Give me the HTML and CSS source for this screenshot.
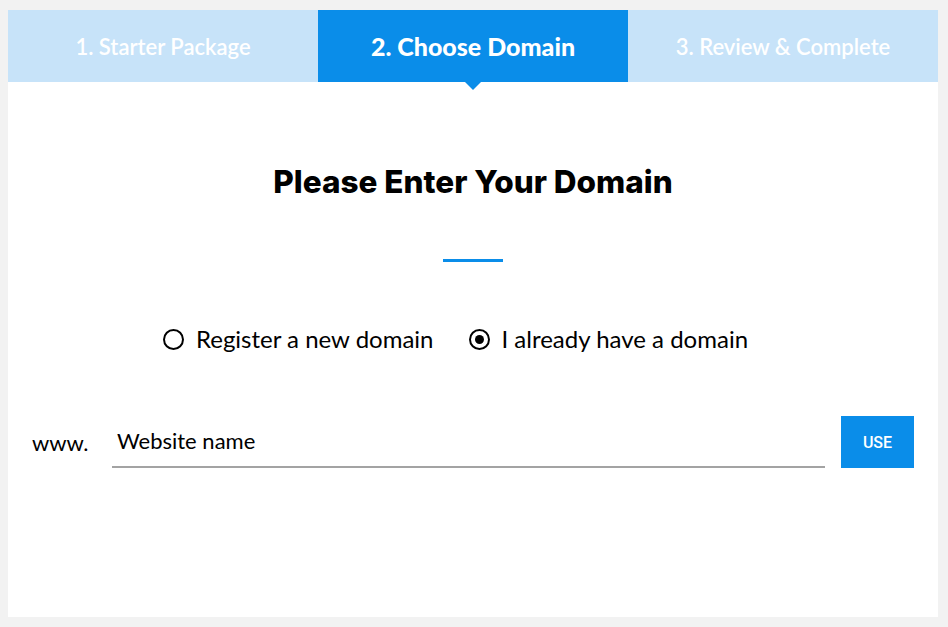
FILE: index.html
```html
<!DOCTYPE html>
<html>
<head>
<meta charset="utf-8">
<link rel="stylesheet" href="styles.css">
</head>
<body>
<div class="card">
  <div class="tabs">
    <div class="tab">1. Starter Package</div>
    <div class="tab active">2. Choose Domain</div>
    <div class="tab">3. Review &amp; Complete</div>
  </div>
  <div class="content">
    <h1 class="title">Please Enter Your Domain</h1>
    <div class="rule"></div>
    <div class="radios">
      <label class="radio"><span class="circle"></span>Register a new domain</label>
      <label class="radio"><span class="circle checked"></span>I already have a domain</label>
    </div>
    <div class="domain-row">
      <span class="prefix">www.</span>
      <div class="input">Website name</div>
      <button class="use">USE</button>
    </div>
  </div>
</div>
</body>
</html>
```
FILE: styles.css
```css
html, body { margin: 0; padding: 0; }
body {
  background: #f2f2f2;
  padding: 10px 10px 10px 8px;
  font-family: Lato, "Liberation Sans", sans-serif;
}
.card {
  width: 930px;
  height: 607px;
  background: #fff;
}
.tabs {
  display: grid;
  grid-template-columns: 310px 310px 310px;
  height: 72px;
}
.tab {
  background: #c7e3f9;
  color: #fff;
  font-size: 22px;
  font-weight: 600;
  display: flex;
  align-items: center;
  justify-content: center;
  position: relative;
}
.tab.active {
  background: #0a8de9;
  font-weight: 900;
  font-size: 25px;
}
.tab.active::after {
  content: "";
  position: absolute;
  left: 50%;
  bottom: -8px;
  margin-left: -8px;
  border-left: 8px solid transparent;
  border-right: 8px solid transparent;
  border-top: 8px solid #0a8de9;
}
.content {
  display: flex;
  flex-direction: column;
  align-items: center;
}
.title {
  margin: 80px 0 0;
  font-family: Inter, "Liberation Sans", sans-serif;
  font-weight: 800;
  font-size: 31.5px;
  line-height: 40px;
  color: #000;
}
.rule {
  width: 60px;
  height: 3px;
  background: #0a8de9;
  margin-top: 57px;
}
.radios {
  display: flex;
  margin-top: 62px;
}
.radio {
  display: flex;
  align-items: center;
  font-size: 24px;
  color: #000;
  line-height: 30px;
  margin-right: 35px;
}
.circle {
  width: 17px;
  height: 17px;
  border: 2px solid #000;
  border-radius: 50%;
  margin-right: 12px;
  display: flex;
  align-items: center;
  justify-content: center;
}
.circle.checked::before {
  content: "";
  width: 9px;
  height: 9px;
  border-radius: 50%;
  background: #000;
}
.domain-row {
  align-self: stretch;
  display: flex;
  align-items: center;
  padding: 0 24px;
  margin-top: 62px;
}
.prefix {
  font-size: 22px;
  color: #000;
  width: 80px;
}
.input {
  flex: 1;
  font-size: 22px;
  color: #000;
  padding: 0 5px;
  height: 50px;
  line-height: 50px;
  border-bottom: 2px solid #a3a3a3;
  margin-right: 16px;
}
.use {
  width: 73px;
  height: 52px;
  border: 0;
  background: #0a8de9;
  color: #fff;
  font-family: Roboto, "Liberation Sans", sans-serif;
  font-weight: 500;
  font-size: 16px;
  padding: 0;
}
```
